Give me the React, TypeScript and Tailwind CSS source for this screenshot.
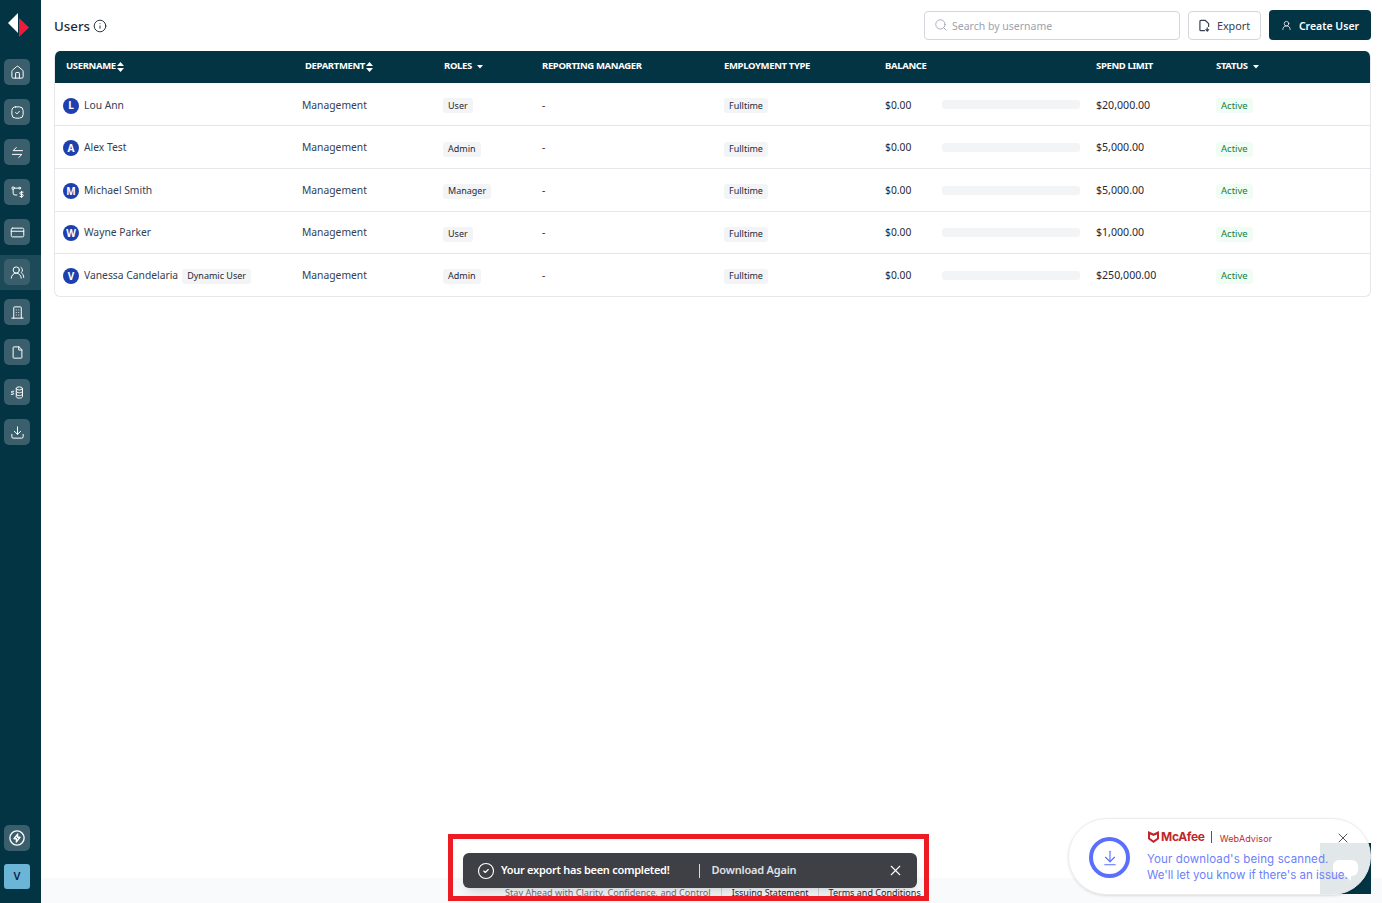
import React from 'react'
import { House, UsersRound, CreditCard, Download, Info, Search, CircleCheck, X, UserRound, ArrowDownToLine } from 'lucide-react'

const users = [
  { name: 'Lou Ann', role: 'User', limit: '$20,000.00', h: 'h-[42px] pt-[3px]', b: '' },
  { name: 'Alex Test', role: 'Admin', limit: '$5,000.00', h: 'h-[43px] pt-[2px]', b: 'pt-[2px]' },
  { name: 'Michael Smith', role: 'Manager', limit: '$5,000.00', h: 'h-[43px] pt-[2px]', b: '' },
  { name: 'Wayne Parker', role: 'User', limit: '$1,000.00', h: 'h-[42px] pt-[1px]', b: 'pt-[2px]' },
  { name: 'Vanessa Candelaria', role: 'Admin', limit: '$250,000.00', h: 'h-[43px] pt-[2px]', b: '', tag: 'Dynamic User' },
]

const cols = 'grid grid-cols-[239px_139px_98px_182px_161px_211px_120px_1fr] items-center'

const Ico = ({ children }: { children: React.ReactNode }) => (
  <svg width="15" height="15" viewBox="0 0 24 24" fill="none" stroke="currentColor" strokeWidth="1.6" strokeLinecap="round" strokeLinejoin="round">
    {children}
  </svg>
)

const SideBtn = ({ children }: { children: React.ReactNode }) => (
  <div className="w-[26px] h-[26px] rounded-[5px] bg-[#3a5e6b] flex items-center justify-center text-white">{children}</div>
)

const Sort = () => (
  <svg width="7" height="10" viewBox="0 0 7 10" className="ml-px" fill="white">
    <path d="M3.5 0 7 4H0zM3.5 10 0 6h7z" />
  </svg>
)

const Caret = () => (
  <svg width="6" height="4" viewBox="0 0 6 4" className="ml-[5px]" fill="white">
    <path d="M0 0h6L3 3.5z" />
  </svg>
)

const Head = ({ children }: { children: React.ReactNode }) => (
  <div className="pl-[11px] pb-[1px] flex items-center text-[9.5px] font-bold text-white tracking-[-0.35px]">{children}</div>
)

const Badge = ({ children }: { children: React.ReactNode }) => (
  <span className="inline-flex items-center h-[15px] px-[5px] rounded-[3px] bg-[#f3f4f6] text-[9px] text-[#1f2937]">{children}</span>
)

export default function App() {
  return (
    <div className="relative flex h-[903px] overflow-hidden bg-white font-['Noto_Sans',sans-serif] text-[#1f2937]">
      {/* Sidebar */}
      <aside className="w-[41px] shrink-0 bg-[#023444] flex flex-col">
        <div className="h-[59px] w-full pt-[13px] pl-[8px]">
          <svg width="21" height="24" viewBox="0 0 21 24">
            <path d="M10 0v20L0 10z" fill="#fff" />
            <path d="M11 5v19l10-9.500z" fill="#ee1c3a" />
          </svg>
        </div>
        <div className="flex flex-col w-full items-start pl-[4px] gap-[14px]">
          <SideBtn><House size={15} strokeWidth={1.6} /></SideBtn>
          <SideBtn>
            <Ico>
              <rect x="3" y="3" width="18" height="18" rx="6" />
              <path d="m9 12 2.200 2.200L15 10" />
            </Ico>
          </SideBtn>
          <SideBtn>
            <Ico>
              <path d="M20 9H5l5-5" />
              <path d="M4 15h15l-5 5" />
            </Ico>
          </SideBtn>
          <SideBtn>
            <Ico>
              <circle cx="5" cy="5" r="2" />
              <path d="M7 5h7M5 7v6a3 3 0 0 0 3 3h3" />
              <circle cx="15.500" cy="5" r="1.500" />
              <path d="M21 11.500h-3.500a1.700 1.700 0 0 0 0 3.500h2a1.700 1.700 0 0 1 0 3.500H16M18.500 10v10" />
            </Ico>
          </SideBtn>
          <SideBtn><CreditCard size={15} strokeWidth={1.6} /></SideBtn>
          <div className="w-[41px] h-[35px] -ml-[4px] -my-[4.5px] pl-[4px] bg-[#1c4a59] flex items-center">
            <SideBtn><UsersRound size={15} strokeWidth={1.6} /></SideBtn>
          </div>
          <SideBtn>
            <Ico>
              <path d="M6 21V4a1 1 0 0 1 1-1h10a1 1 0 0 1 1 1v17M3 21h18" />
              <path d="M10 8h.01M14 8h.01M10 12h.01M14 12h.01M10 16h.01M14 16h.01" />
            </Ico>
          </SideBtn>
          <SideBtn>
            <Ico>
              <path d="M14 3H6a1 1 0 0 0-1 1v16a1 1 0 0 0 1 1h12a1 1 0 0 0 1-1V8z" />
              <path d="M14 3v5h5" />
            </Ico>
          </SideBtn>
          <SideBtn>
            <Ico>
              <ellipse cx="15" cy="5.500" rx="5" ry="2.500" />
              <path d="M10 5.500v13c0 1.400 2.200 2.500 5 2.500s5-1.100 5-2.500v-13M10 10c0 1.400 2.200 2.500 5 2.500s5-1.100 5-2.500M10 14.500c0 1.400 2.200 2.500 5 2.500s5-1.100 5-2.500" />
              <path d="M6 10H3.500a1 1 0 0 0 0 2.500h1a1 1 0 0 1 0 2.500H2" />
            </Ico>
          </SideBtn>
          <SideBtn><Download size={15} strokeWidth={1.6} /></SideBtn>
        </div>
        <div className="mt-auto mb-[14px] pl-[4px] flex flex-col gap-[13px]">
          <SideBtn>
            <svg width="18" height="18" viewBox="0 0 24 24" fill="none" stroke="currentColor" strokeWidth="1.800" strokeLinejoin="round">
              <circle cx="12" cy="12" r="9.500" />
              <path d="M13 6.500 8 13h3.500L11 17.500 16 11h-3.500z" />
            </svg>
          </SideBtn>
          <div className="w-[26px] h-[25px] rounded-[3px] bg-[#6bb5d6] flex items-center justify-center text-[11px] font-semibold text-[#0f1e46]">V</div>
        </div>
      </aside>

      {/* Main */}
      <main className="flex-1 min-w-0 flex flex-col">
        <div className="flex items-center h-[51px] pl-[13px] pr-[11px] pb-[1px]">
          <h1 className="text-[13.300px] font-medium text-[#1f2937] mt-[4px]">Users</h1>
          <Info size={14} strokeWidth={1.600} className="ml-[3px] mt-[2px]" />
          <div className="ml-auto flex items-center gap-2">
            <div className="w-[256px] h-[29px] rounded-[4px] border border-[#d4d6de] flex items-center pl-[9px] gap-[5px] text-[#9ca3af]">
              <Search size={14} strokeWidth={1.500} />
              <span className="text-[10.500px] pt-[3px] -ml-px">Search by username</span>
            </div>
            <button className="w-[73px] h-[29px] rounded-[4px] border border-[#d4d6de] flex items-center justify-center gap-[7px] text-[10.800px] text-[#374151]">
              <svg width="11" height="13" viewBox="0 0 12 14" fill="none" stroke="currentColor" strokeWidth="1.300" strokeLinecap="round" strokeLinejoin="round">
                <path d="M6 12.500H2a1 1 0 0 1-1-1v-9a1 1 0 0 1 1-1h5l3.500 3.500v3" />
                <path d="M9 9.500v3.500M7.500 11.500 9 13l1.500-1.500" />
              </svg>
              <span className="pt-[2px]">Export</span>
            </button>
            <button className="w-[102px] h-[30px] rounded-[4px] bg-[#023444] flex items-center justify-center gap-[7px] text-[10.500px] font-semibold text-white">
              <UserRound size={11} strokeWidth={1.600} />
              <span className="pt-[3px]">Create User</span>
            </button>
          </div>
        </div>

        <div className="ml-[13px] mr-[11px] rounded-[6px] border border-t-0 border-[#e5e7eb] overflow-hidden">
          <div className={`${cols} h-[32px] bg-[#023444]`}>
            <Head>USERNAME<Sort /></Head>
            <Head>DEPARTMENT<Sort /></Head>
            <Head>ROLES<Caret /></Head>
            <Head>REPORTING MANAGER</Head>
            <Head>EMPLOYMENT TYPE</Head>
            <Head>BALANCE</Head>
            <Head>SPEND LIMIT</Head>
            <Head>STATUS<Caret /></Head>
          </div>
          {users.map((u, i) => (
            <div key={u.name} className={`${cols} ${u.h} text-[10.300px] ${i > 0 ? 'border-t border-[#e5e7eb]' : ''}`}>
              <div className="pl-[8px] flex items-center">
                <span className="w-4 h-4 rounded-full bg-[#1e40af] text-white text-[10px] font-bold flex items-center justify-center">{u.name[0]}</span>
                <span className="ml-[5px] text-[#334155]">{u.name}</span>
                {u.tag && <span className="ml-[4px]"><Badge>{u.tag}</Badge></span>}
              </div>
              <div className="pl-[8px] text-[#334155]">Management</div>
              <div className={`pl-[10px] ${u.b}`}><Badge>{u.role}</Badge></div>
              <div className="pl-[11px]">-</div>
              <div className={`pl-[11px] ${u.b}`}><Badge>Fulltime</Badge></div>
              <div className="pl-[11px] flex items-center">
                <span className="w-[57px]">$0.00</span>
                <div className="w-[138px] h-[9px] -mt-[2px] rounded-[3px] bg-[#f3f4f6]" />
              </div>
              <div className="pl-[11px] text-[10.600px]">{u.limit}</div>
              <div className={`pl-[11px] ${u.b}`}>
                <span className="inline-flex items-center h-[15px] px-[5px] rounded-[3px] bg-[#f0fdf4] text-[9.500px] text-[#15803d]">Active</span>
              </div>
            </div>
          ))}
        </div>

        <footer className="mt-auto h-[25px] bg-[#f9fafb] flex items-center pl-[464px] pt-[5px] text-[9px] text-[#1f2937]">
          <span className="text-[#6b7280] text-[9.100px]">Stay Ahead with Clarity, Confidence, and Control</span>
          <span className="mx-[10px] h-[10px] w-px bg-[#d1d5db]" />
          <span>Issuing Statement</span>
          <span className="mx-[9.500px] h-[10px] w-px bg-[#d1d5db]" />
          <span>Terms and Conditions</span>
        </footer>
      </main>

      {/* Export toast */}
      <div className="absolute left-[463px] top-[853px] w-[454px] h-[35px] rounded-[6px] bg-[#3f4045] shadow-lg flex items-center pl-[14px] pr-[13px] text-[11px] text-white">
        <CircleCheck size={18} strokeWidth={1.500} />
        <span className="ml-[6px] font-semibold tracking-[-0.28px]">Your export has been completed!</span>
        <span className="ml-[29px] h-[14px] w-px bg-white/80" />
        <span className="ml-[12px] font-semibold text-[#e0e2e6] tracking-[-0.2px]">Download Again</span>
        <X size={17} strokeWidth={1.500} className="ml-auto" />
      </div>

      {/* Red annotation frame */}
      <div className="absolute left-[448px] top-[834px] w-[481px] h-[67px] border-[5px] border-[#ed1c24] pointer-events-none" />

      {/* Chat widget, seen through the extension popup */}
      <div className="absolute left-[1320px] top-[843px] w-[51px] h-[51px] bg-[#023444]">
        <svg width="25" height="22" viewBox="0 0 25 22" className="absolute left-[13px] top-[17px]" fill="white">
          <path d="M6 0h13a6 6 0 0 1 6 6v4a6 6 0 0 1-6 6h-1v5l-5-5H6a6 6 0 0 1-6-6V6a6 6 0 0 1 6-6z" />
        </svg>
      </div>

      {/* McAfee popup */}
      <div className="absolute left-[1068px] top-[818px] w-[303px] h-[77px] rounded-[39px] bg-white/[0.885] border border-[#ececec] shadow-sm font-['Inter',sans-serif]">
        <div className="absolute left-[20px] top-[18px] w-[41px] h-[41px] rounded-full border-[4px] border-[#5a6ffb] flex items-center justify-center text-[#5a6ffb]">
          <ArrowDownToLine size={18} strokeWidth={1.500} />
        </div>
        <div className="absolute left-[79px] top-[9px] flex items-center text-[#c0272d]">
          <svg width="11" height="12" viewBox="0 0 11 12" fill="#c0272d">
            <path d="M0 0 5.500 2.500 11 0v8L5.500 12 0 8zM2 3.500v3.500l3.500 2.500L9 7V3.500L5.500 5z" />
          </svg>
          <span className="ml-[2px] text-[12px] font-bold tracking-[-0.3px]">McAfee</span>
          <span className="ml-[6px] h-[12px] w-px bg-[#c0272d]" />
          <span className="ml-[8px] text-[9px] mt-[3px] tracking-[0.1px]">WebAdvisor</span>
        </div>
        <X size={16} strokeWidth={1.500} className="absolute left-[266px] top-[11px] text-[#555]" />
        <div className="absolute left-[78px] top-[32px] text-[11.500px] leading-[16px] text-[#6d80fb] whitespace-nowrap">
          <div className="tracking-[0.13px]">Your download's being scanned.</div>
          <div>We'll let you know if there's an issue.</div>
        </div>
      </div>
    </div>
  )
}
